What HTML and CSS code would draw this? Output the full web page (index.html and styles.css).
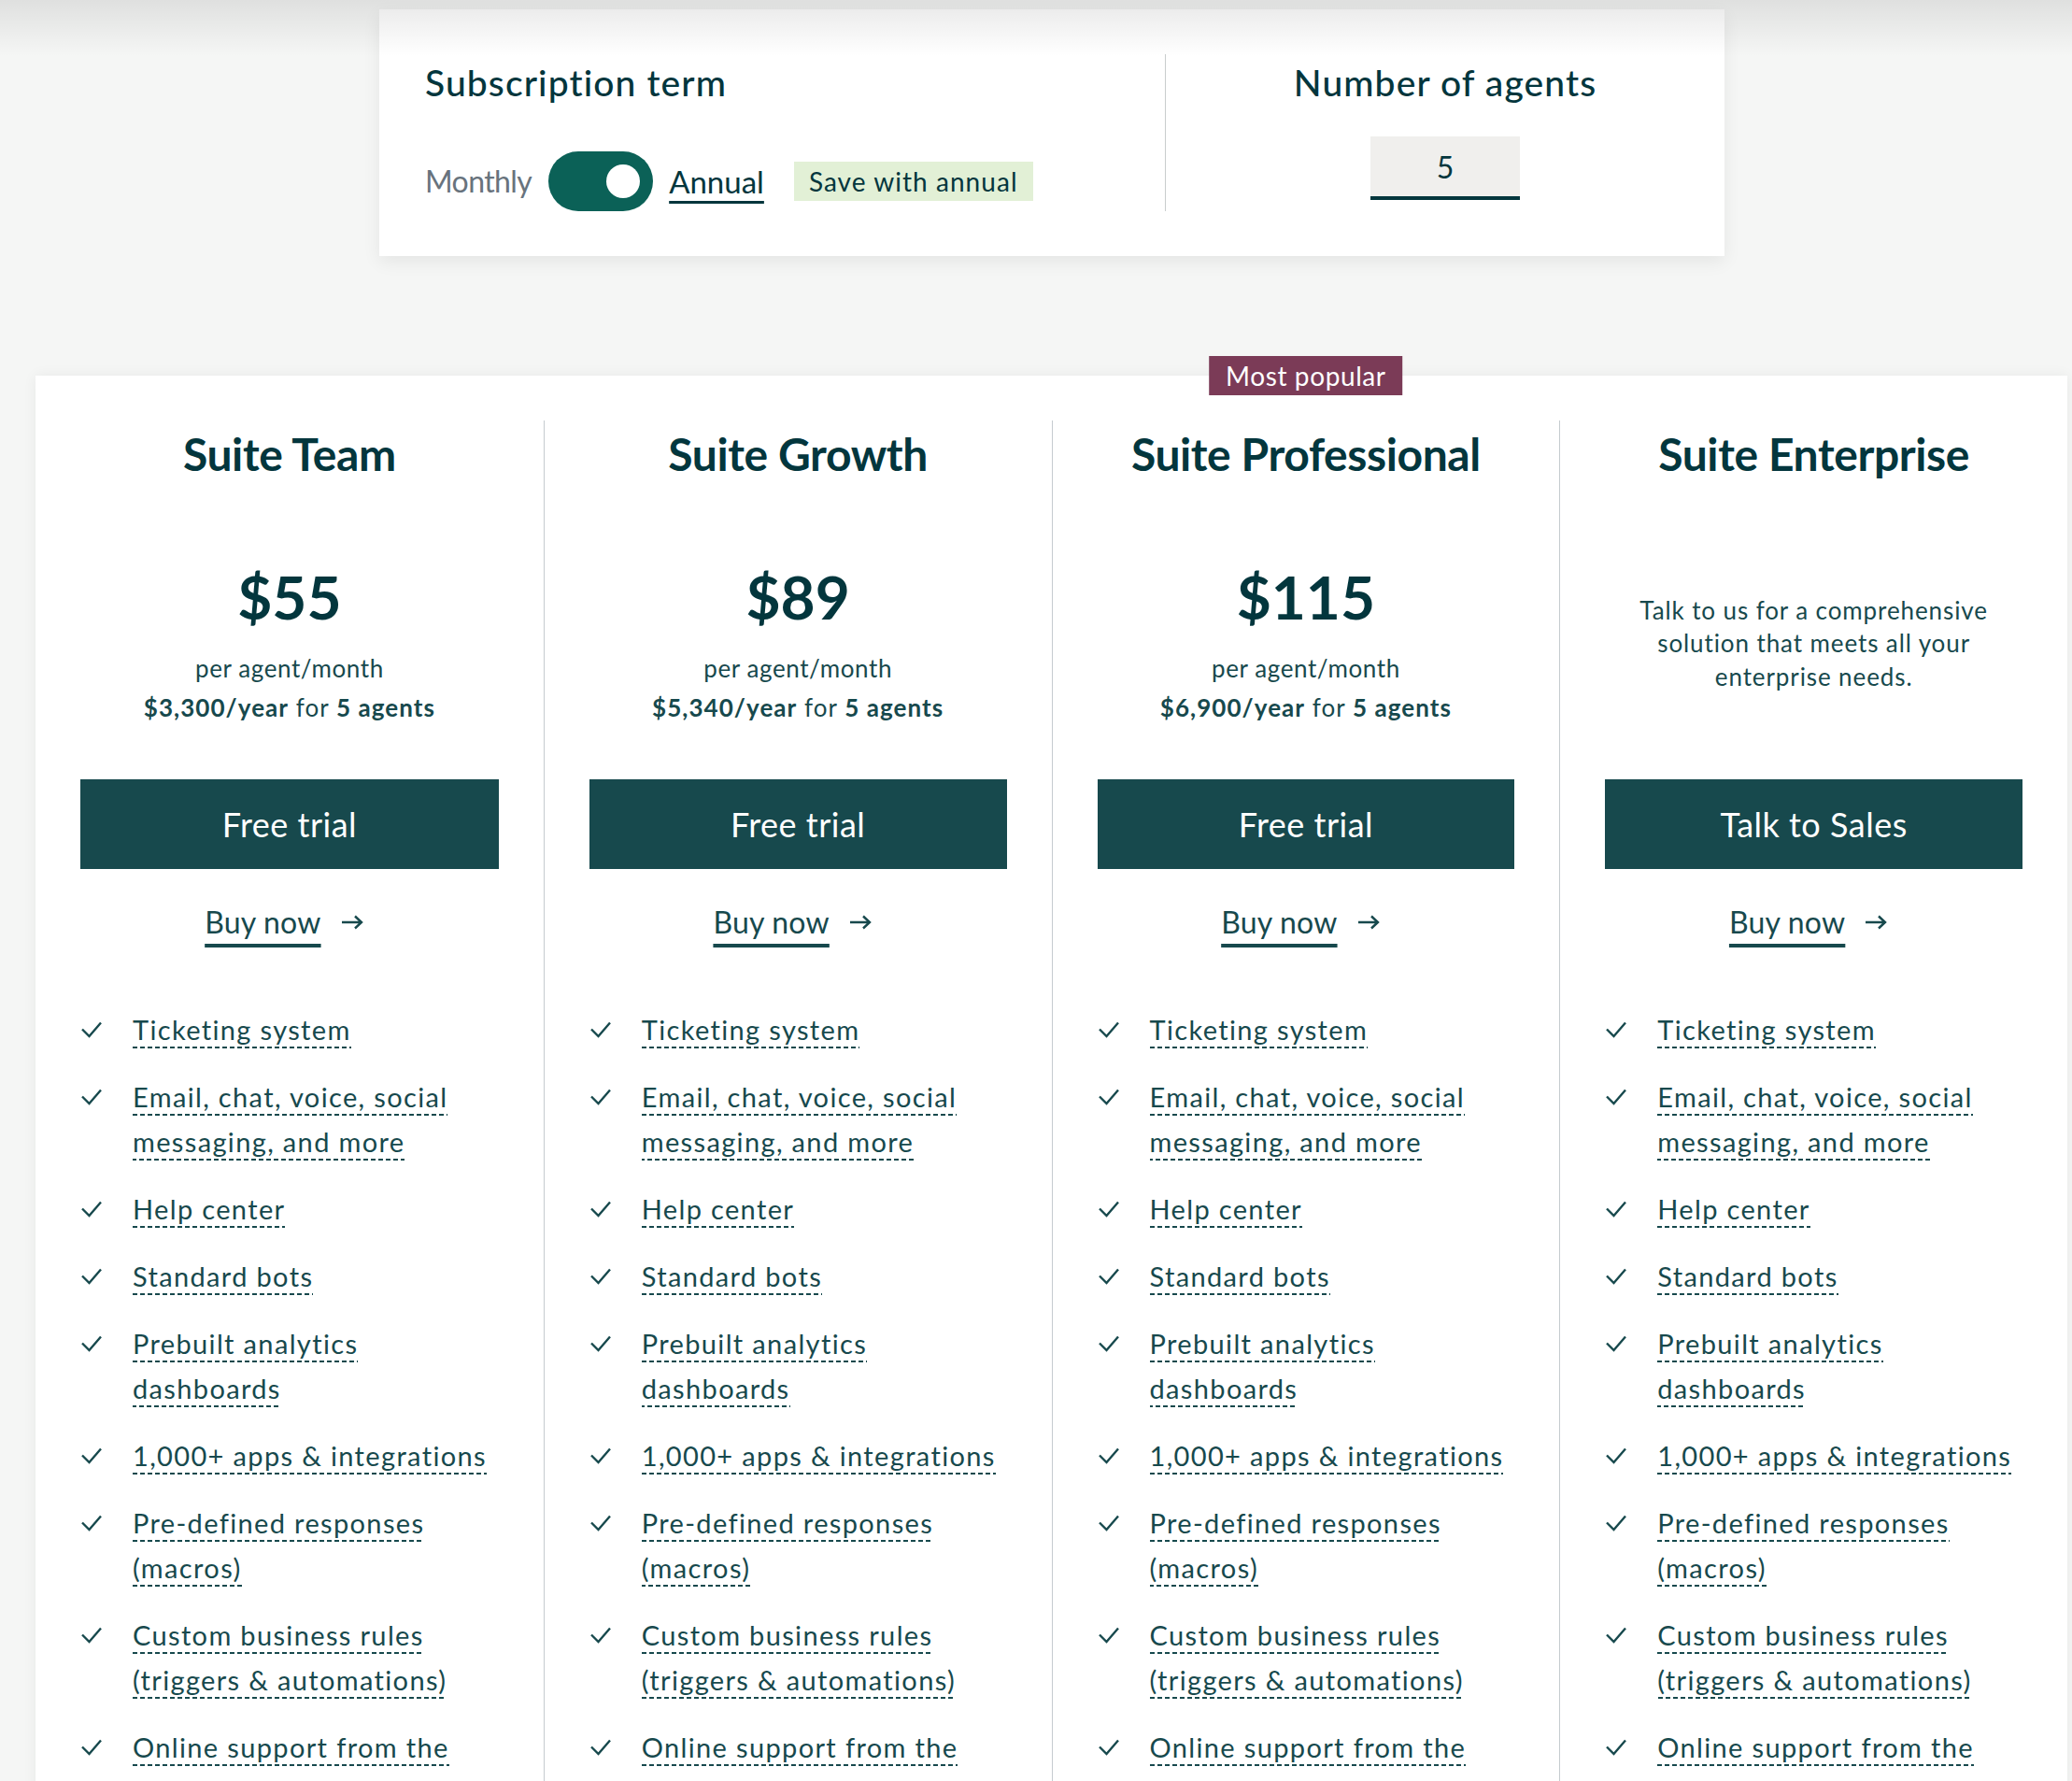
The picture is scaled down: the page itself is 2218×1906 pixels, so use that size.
FILE: index.html
```html
<!DOCTYPE html>
<html lang="en">
<head>
<meta charset="utf-8">
<title>Zendesk Suite pricing</title>
<link rel="stylesheet" href="styles.css">
</head>
<body>
<div class="shade"></div>
<main class="page">
  <section class="controls">
    <div class="term">
      <h2 class="ctl-title">Subscription term</h2>
      <div class="term-row">
        <span class="opt-off">Monthly</span>
        <span class="switch"><span class="knob"></span></span>
        <span class="opt-on">Annual</span>
        <span class="save">Save with annual</span>
      </div>
    </div>
    <div class="agents">
      <h2 class="ctl-title">Number of agents</h2>
      <div class="agent-input">5</div>
    </div>
  </section>

  <section class="plans">
    <div class="plan">
      <h3 class="plan-name">Suite Team</h3>
      <div class="price-area">
        <div class="price">$55</div>
        <div class="per">per agent/month</div>
        <div class="yearly"><b>$3,300/year</b> for <b>5 agents</b></div>
      </div>
      <a class="btn">Free trial</a>
      <div class="buy"><span class="buy-text">Buy now</span><svg class="arrow" width="36" height="16" viewBox="0 0 36 16"><path d="M1 8H22M15 1.5L22 8L15 14.5" fill="none" stroke="#17494d" stroke-width="2.4"/></svg></div>
      <ul class="features">
        <li><svg class="check" viewBox="0 0 22 18"><path d="M1 8.5L8.5 16L21 1.5" fill="none" stroke="#17494d" stroke-width="2.4"/></svg><span class="ft"><span class="feat-text">Ticketing system</span></span></li>
        <li><svg class="check" viewBox="0 0 22 18"><path d="M1 8.5L8.5 16L21 1.5" fill="none" stroke="#17494d" stroke-width="2.4"/></svg><span class="ft"><span class="feat-text">Email, chat, voice, social messaging, and more</span></span></li>
        <li><svg class="check" viewBox="0 0 22 18"><path d="M1 8.5L8.5 16L21 1.5" fill="none" stroke="#17494d" stroke-width="2.4"/></svg><span class="ft"><span class="feat-text">Help center</span></span></li>
        <li><svg class="check" viewBox="0 0 22 18"><path d="M1 8.5L8.5 16L21 1.5" fill="none" stroke="#17494d" stroke-width="2.4"/></svg><span class="ft"><span class="feat-text">Standard bots</span></span></li>
        <li><svg class="check" viewBox="0 0 22 18"><path d="M1 8.5L8.5 16L21 1.5" fill="none" stroke="#17494d" stroke-width="2.4"/></svg><span class="ft"><span class="feat-text">Prebuilt analytics dashboards</span></span></li>
        <li><svg class="check" viewBox="0 0 22 18"><path d="M1 8.5L8.5 16L21 1.5" fill="none" stroke="#17494d" stroke-width="2.4"/></svg><span class="ft"><span class="feat-text">1,000+ apps &amp; integrations</span></span></li>
        <li><svg class="check" viewBox="0 0 22 18"><path d="M1 8.5L8.5 16L21 1.5" fill="none" stroke="#17494d" stroke-width="2.4"/></svg><span class="ft"><span class="feat-text">Pre-defined responses (macros)</span></span></li>
        <li><svg class="check" viewBox="0 0 22 18"><path d="M1 8.5L8.5 16L21 1.5" fill="none" stroke="#17494d" stroke-width="2.4"/></svg><span class="ft"><span class="feat-text">Custom business rules (triggers &amp; automations)</span></span></li>
        <li><svg class="check" viewBox="0 0 22 18"><path d="M1 8.5L8.5 16L21 1.5" fill="none" stroke="#17494d" stroke-width="2.4"/></svg><span class="ft"><span class="feat-text">Online support from the Zendesk team</span></span></li>
      </ul>
    </div>

    <div class="plan">
      <h3 class="plan-name">Suite Growth</h3>
      <div class="price-area">
        <div class="price">$89</div>
        <div class="per">per agent/month</div>
        <div class="yearly"><b>$5,340/year</b> for <b>5 agents</b></div>
      </div>
      <a class="btn">Free trial</a>
      <div class="buy"><span class="buy-text">Buy now</span><svg class="arrow" width="36" height="16" viewBox="0 0 36 16"><path d="M1 8H22M15 1.5L22 8L15 14.5" fill="none" stroke="#17494d" stroke-width="2.4"/></svg></div>
      <ul class="features">
        <li><svg class="check" viewBox="0 0 22 18"><path d="M1 8.5L8.5 16L21 1.5" fill="none" stroke="#17494d" stroke-width="2.4"/></svg><span class="ft"><span class="feat-text">Ticketing system</span></span></li>
        <li><svg class="check" viewBox="0 0 22 18"><path d="M1 8.5L8.5 16L21 1.5" fill="none" stroke="#17494d" stroke-width="2.4"/></svg><span class="ft"><span class="feat-text">Email, chat, voice, social messaging, and more</span></span></li>
        <li><svg class="check" viewBox="0 0 22 18"><path d="M1 8.5L8.5 16L21 1.5" fill="none" stroke="#17494d" stroke-width="2.4"/></svg><span class="ft"><span class="feat-text">Help center</span></span></li>
        <li><svg class="check" viewBox="0 0 22 18"><path d="M1 8.5L8.5 16L21 1.5" fill="none" stroke="#17494d" stroke-width="2.4"/></svg><span class="ft"><span class="feat-text">Standard bots</span></span></li>
        <li><svg class="check" viewBox="0 0 22 18"><path d="M1 8.5L8.5 16L21 1.5" fill="none" stroke="#17494d" stroke-width="2.4"/></svg><span class="ft"><span class="feat-text">Prebuilt analytics dashboards</span></span></li>
        <li><svg class="check" viewBox="0 0 22 18"><path d="M1 8.5L8.5 16L21 1.5" fill="none" stroke="#17494d" stroke-width="2.4"/></svg><span class="ft"><span class="feat-text">1,000+ apps &amp; integrations</span></span></li>
        <li><svg class="check" viewBox="0 0 22 18"><path d="M1 8.5L8.5 16L21 1.5" fill="none" stroke="#17494d" stroke-width="2.4"/></svg><span class="ft"><span class="feat-text">Pre-defined responses (macros)</span></span></li>
        <li><svg class="check" viewBox="0 0 22 18"><path d="M1 8.5L8.5 16L21 1.5" fill="none" stroke="#17494d" stroke-width="2.4"/></svg><span class="ft"><span class="feat-text">Custom business rules (triggers &amp; automations)</span></span></li>
        <li><svg class="check" viewBox="0 0 22 18"><path d="M1 8.5L8.5 16L21 1.5" fill="none" stroke="#17494d" stroke-width="2.4"/></svg><span class="ft"><span class="feat-text">Online support from the Zendesk team</span></span></li>
      </ul>
    </div>

    <div class="plan popular">
      <span class="badge">Most popular</span>
      <h3 class="plan-name">Suite Professional</h3>
      <div class="price-area">
        <div class="price">$115</div>
        <div class="per">per agent/month</div>
        <div class="yearly"><b>$6,900/year</b> for <b>5 agents</b></div>
      </div>
      <a class="btn">Free trial</a>
      <div class="buy"><span class="buy-text">Buy now</span><svg class="arrow" width="36" height="16" viewBox="0 0 36 16"><path d="M1 8H22M15 1.5L22 8L15 14.5" fill="none" stroke="#17494d" stroke-width="2.4"/></svg></div>
      <ul class="features">
        <li><svg class="check" viewBox="0 0 22 18"><path d="M1 8.5L8.5 16L21 1.5" fill="none" stroke="#17494d" stroke-width="2.4"/></svg><span class="ft"><span class="feat-text">Ticketing system</span></span></li>
        <li><svg class="check" viewBox="0 0 22 18"><path d="M1 8.5L8.5 16L21 1.5" fill="none" stroke="#17494d" stroke-width="2.4"/></svg><span class="ft"><span class="feat-text">Email, chat, voice, social messaging, and more</span></span></li>
        <li><svg class="check" viewBox="0 0 22 18"><path d="M1 8.5L8.5 16L21 1.5" fill="none" stroke="#17494d" stroke-width="2.4"/></svg><span class="ft"><span class="feat-text">Help center</span></span></li>
        <li><svg class="check" viewBox="0 0 22 18"><path d="M1 8.5L8.5 16L21 1.5" fill="none" stroke="#17494d" stroke-width="2.4"/></svg><span class="ft"><span class="feat-text">Standard bots</span></span></li>
        <li><svg class="check" viewBox="0 0 22 18"><path d="M1 8.5L8.5 16L21 1.5" fill="none" stroke="#17494d" stroke-width="2.4"/></svg><span class="ft"><span class="feat-text">Prebuilt analytics dashboards</span></span></li>
        <li><svg class="check" viewBox="0 0 22 18"><path d="M1 8.5L8.5 16L21 1.5" fill="none" stroke="#17494d" stroke-width="2.4"/></svg><span class="ft"><span class="feat-text">1,000+ apps &amp; integrations</span></span></li>
        <li><svg class="check" viewBox="0 0 22 18"><path d="M1 8.5L8.5 16L21 1.5" fill="none" stroke="#17494d" stroke-width="2.4"/></svg><span class="ft"><span class="feat-text">Pre-defined responses (macros)</span></span></li>
        <li><svg class="check" viewBox="0 0 22 18"><path d="M1 8.5L8.5 16L21 1.5" fill="none" stroke="#17494d" stroke-width="2.4"/></svg><span class="ft"><span class="feat-text">Custom business rules (triggers &amp; automations)</span></span></li>
        <li><svg class="check" viewBox="0 0 22 18"><path d="M1 8.5L8.5 16L21 1.5" fill="none" stroke="#17494d" stroke-width="2.4"/></svg><span class="ft"><span class="feat-text">Online support from the Zendesk team</span></span></li>
      </ul>
    </div>

    <div class="plan">
      <h3 class="plan-name">Suite Enterprise</h3>
      <div class="price-area">
        <p class="desc">Talk to us for a comprehensive solution that meets all your enterprise needs.</p>
      </div>
      <a class="btn">Talk to Sales</a>
      <div class="buy"><span class="buy-text">Buy now</span><svg class="arrow" width="36" height="16" viewBox="0 0 36 16"><path d="M1 8H22M15 1.5L22 8L15 14.5" fill="none" stroke="#17494d" stroke-width="2.4"/></svg></div>
      <ul class="features">
        <li><svg class="check" viewBox="0 0 22 18"><path d="M1 8.5L8.5 16L21 1.5" fill="none" stroke="#17494d" stroke-width="2.4"/></svg><span class="ft"><span class="feat-text">Ticketing system</span></span></li>
        <li><svg class="check" viewBox="0 0 22 18"><path d="M1 8.5L8.5 16L21 1.5" fill="none" stroke="#17494d" stroke-width="2.4"/></svg><span class="ft"><span class="feat-text">Email, chat, voice, social messaging, and more</span></span></li>
        <li><svg class="check" viewBox="0 0 22 18"><path d="M1 8.5L8.5 16L21 1.5" fill="none" stroke="#17494d" stroke-width="2.4"/></svg><span class="ft"><span class="feat-text">Help center</span></span></li>
        <li><svg class="check" viewBox="0 0 22 18"><path d="M1 8.5L8.5 16L21 1.5" fill="none" stroke="#17494d" stroke-width="2.4"/></svg><span class="ft"><span class="feat-text">Standard bots</span></span></li>
        <li><svg class="check" viewBox="0 0 22 18"><path d="M1 8.5L8.5 16L21 1.5" fill="none" stroke="#17494d" stroke-width="2.4"/></svg><span class="ft"><span class="feat-text">Prebuilt analytics dashboards</span></span></li>
        <li><svg class="check" viewBox="0 0 22 18"><path d="M1 8.5L8.5 16L21 1.5" fill="none" stroke="#17494d" stroke-width="2.4"/></svg><span class="ft"><span class="feat-text">1,000+ apps &amp; integrations</span></span></li>
        <li><svg class="check" viewBox="0 0 22 18"><path d="M1 8.5L8.5 16L21 1.5" fill="none" stroke="#17494d" stroke-width="2.4"/></svg><span class="ft"><span class="feat-text">Pre-defined responses (macros)</span></span></li>
        <li><svg class="check" viewBox="0 0 22 18"><path d="M1 8.5L8.5 16L21 1.5" fill="none" stroke="#17494d" stroke-width="2.4"/></svg><span class="ft"><span class="feat-text">Custom business rules (triggers &amp; automations)</span></span></li>
        <li><svg class="check" viewBox="0 0 22 18"><path d="M1 8.5L8.5 16L21 1.5" fill="none" stroke="#17494d" stroke-width="2.4"/></svg><span class="ft"><span class="feat-text">Online support from the Zendesk team</span></span></li>
      </ul>
    </div>
  </section>
</main>
</body>
</html>
```

FILE: styles.css
```css
* { box-sizing: border-box; margin: 0; padding: 0; }
html, body { background: #f5f6f5; }
body {
  font-family: Lato, "Liberation Sans", sans-serif;
  color: #03363d;
  position: relative;
}
.shade {
  position: absolute; left: 0; right: 0; top: 0; height: 60px;
  background: linear-gradient(rgba(0,0,0,.09), rgba(0,0,0,0));
  pointer-events: none; z-index: 5;
}
.page { padding-top: 10px; padding-bottom: 300px; }

/* controls panel */
.controls {
  margin-left: 406px; width: 1440px; height: 264px;
  background: #fff; box-shadow: 0 6px 18px rgba(0,0,0,.07);
  display: flex; padding-top: 48px;
}
.term { width: 841px; padding-left: 49px; padding-top: 6px; }
.agents {
  flex: 1; height: 168px; border-left: 1px solid #c9cdcd;
  display: flex; flex-direction: column; align-items: center; padding-top: 6px;
}
.ctl-title { font-size: 39px; line-height: 48px; font-weight: 500; letter-spacing: 1.1px; color: #03363d; }
.term-row { margin-top: 50px; height: 64px; display: flex; align-items: center; }
.opt-off { font-size: 32px; line-height: 40px; letter-spacing: -0.6px; color: #68737d; }
.switch {
  margin-left: 18px; width: 112px; height: 64px; border-radius: 32px; background: #0b6157;
  display: flex; align-items: center; justify-content: flex-end; padding-right: 14px;
}
.knob { width: 36px; height: 36px; border-radius: 50%; background: #fff; }
.opt-on {
  margin-left: 17px; font-size: 33px; line-height: 40px; color: #03363d;
  text-decoration: underline; text-decoration-thickness: 3px; text-underline-offset: 8px;
}
.save {
  margin-left: 32px; height: 42px; padding: 0 16px; background: #e2f0d6;
  display: flex; align-items: center; font-size: 28px; letter-spacing: 1.05px; color: #03363d;
}
.agent-input {
  margin-top: 34px; width: 160px; height: 68px; background: #f0efed;
  border-bottom: 4px solid #03363d;
  display: flex; align-items: center; justify-content: center; font-size: 32px; color: #03363d;
}

/* plans card */
.plans {
  margin-left: 38px; width: 2175px; margin-top: 128px;
  background: #fff; box-shadow: 0 0 14px rgba(0,0,0,.06);
  display: grid; grid-template-columns: repeat(4, 1fr); padding-top: 48px;
}
.plan { position: relative; padding: 0 48px; border-left: 1px solid #c5cbcf; }
.plan:first-child { border-left: none; }
.badge {
  position: absolute; top: -69px; left: 50%; transform: translateX(-50%);
  height: 42px; padding: 0 18px; background: #7b3b57; color: #fff;
  display: flex; align-items: center; font-size: 28px; letter-spacing: .6px; white-space: nowrap;
}
.plan-name {
  margin-top: 7px; text-align: center; font-size: 48px; line-height: 58px;
  font-weight: 700; letter-spacing: -0.4px; color: #03363d;
}
.price-area {
  margin-top: 85px; height: 178px; display: flex; flex-direction: column;
  justify-content: center; align-items: center; text-align: center; color: #17494d;
}
.price { font-size: 64px; line-height: 77px; font-weight: 700; color: #03363d; }
.per { margin-top: 17px; font-size: 26px; line-height: 42px; letter-spacing: .6px; }
.yearly { font-size: 26px; line-height: 42px; letter-spacing: 1.05px; }
.yearly b { font-weight: 700; }
.desc { font-size: 26px; line-height: 35.5px; letter-spacing: .9px; }
.btn {
  margin-top: 56px; height: 96px; display: flex; align-items: center; justify-content: center;
  background: #17494d; color: #fff; font-size: 36px; letter-spacing: .5px;
}
.buy { margin-top: 37px; height: 40px; display: flex; align-items: center; justify-content: center; color: #17494d; }
.buy-text {
  font-size: 32px; line-height: 40px; letter-spacing: .2px;
  text-decoration: underline; text-decoration-thickness: 4px; text-underline-offset: 11px;
}
.arrow { margin-left: 21px; flex: none; }
.features { margin-top: 70.5px; list-style: none; color: #17494d; }
.features li { display: flex; align-items: flex-start; margin-bottom: 24px; font-size: 29px; line-height: 48px; }
.check { width: 22px; height: 18px; margin-top: 15.5px; margin-left: 1px; flex: none; }
.ft { margin-left: 33px; }
.feat-text {
  letter-spacing: 1.35px; padding-bottom: 3px;
  background-image: linear-gradient(90deg, #17494d 0 5px, transparent 5px 8px);
  background-size: 8px 2px; background-repeat: repeat-x; background-position: 0 100%;
}
```
